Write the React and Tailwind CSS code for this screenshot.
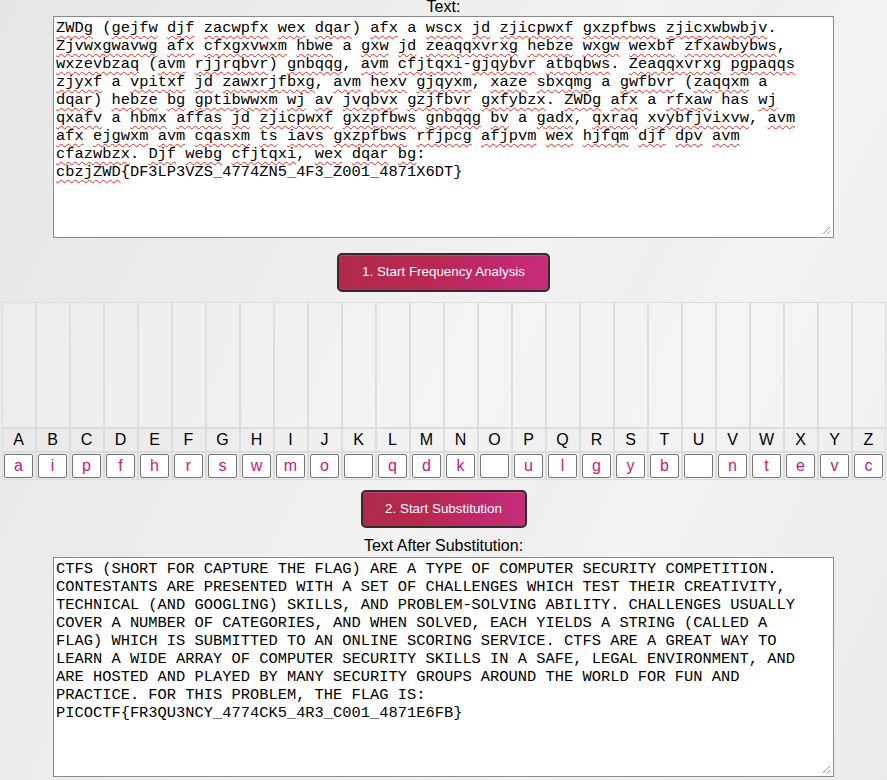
import React from 'react'

// plain -> cipher key used for the ciphertext box
const KEY = {
  a: 'a', b: 't', c: 'z', d: 'm', e: 'x', f: 'd', g: 'r', h: 'e', i: 'b', k: 'n', l: 'q', m: 'i',
  n: 'v', o: 'j', p: 'c', q: 'l', r: 'f', s: 'g', t: 'w', u: 'p', v: 'y', w: 'h', y: 's',
}

const encode = (s) =>
  s.replace(/[a-zA-Z]/g, (ch) => {
    const lo = ch.toLowerCase()
    const out = KEY[lo] || lo
    return ch === lo ? out : out.toUpperCase()
  })

const PLAIN = [
  'CTFs (short for capture the flag) are a type of computer security competition.',
  'Contestants are presented with a set of challenges which test their creativity,',
  'technical (and googling) skills, and problem-solving ability. Challenges usually',
  'cover a number of categories, and when solved, each yields a string (called a',
  'flag) which is submitted to an online scoring service. CTFs are a great way to',
  'learn a wide array of computer security skills in a safe, legal environment, and',
  'are hosted and played by many security groups around the world for fun and',
  'practice. For this problem, the flag is:',
  'picoCTF{FR3QU3NCY_4774CK5_4R3_C001_4871E6FB}',
]

const LETTERS = 'ABCDEFGHIJKLMNOPQRSTUVWXYZ'.split('')
const GUESS = ['a', 'i', 'p', 'f', 'h', 'r', 's', 'w', 'm', 'o', '', 'q', 'd', 'k', '', 'u', 'l', 'g', 'y', 'b', '', 'n', 't', 'e', 'v', 'c']

const sq =
  'underline decoration-wavy decoration-[#e8261b] decoration-1 underline-offset-[3px] [text-decoration-skip-ink:none]'

const CipherLine = ({ line }) => {
  const brace = line.indexOf('{')
  if (brace > -1) {
    return (
      <>
        <span className={sq}>{line.slice(0, brace)}</span>
        {line.slice(brace)}
      </>
    )
  }
  const parts = line.split(/([A-Za-z]+)/)
  return parts.map((p, i) =>
    i % 2 === 1 && p !== 'a' && p !== 'has' ? (
      <span key={i} className={sq}>
        {p}
      </span>
    ) : (
      <React.Fragment key={i}>{p}</React.Fragment>
    )
  )
}

const Grip = () => (
  <svg className="absolute right-[2px] bottom-[2px]" width="9" height="9" viewBox="0 0 9 9">
    <path d="M8 1 L1 8 M8 5 L5 8" stroke="#9a9a9a" strokeWidth="1" />
  </svg>
)

const TextBox = ({ children, h }) => (
  <div
    className={`relative w-[781px] ${h} bg-white border border-[#8a8a8a] px-[2px] pt-[2px] text-black whitespace-pre overflow-hidden text-[15.4px] leading-[18px]`}
    style={{ fontFamily: '"Liberation Mono", "Courier New", monospace' }}
  >
    {children}
    <Grip />
  </div>
)

const Button = ({ children, w, h }) => (
  <button
    className={`${w} ${h} rounded-[5px] border-2 border-[#2e2e2e] text-white text-[13.4px] bg-[linear-gradient(100deg,#b02a4b_0%,#b8284f_40%,#c0286a_70%,#c72d7b_100%)] shadow-[inset_0_1px_0_rgba(255,255,255,0.15)]`}
  >
    {children}
  </button>
)

export default function App() {
  return (
    <div
      className="w-full min-h-screen overflow-hidden flex flex-col items-center bg-[linear-gradient(115deg,#e6e6e6_0%,#ececec_30%,#f2f2f2_52%,#efefef_62%,#f3f3f3_70%,#eaeaea_100%)]"
      style={{ fontFamily: '"Liberation Sans", Arial, sans-serif' }}
    >
      {/* CIPHER TEXT */}
      <div className="-mt-[2px] h-[18px] leading-[18px] text-[16px] text-black">Text:</div>
      <TextBox h="h-[222px]">
        {PLAIN.map((l, i) => (
          <div key={i}>
            <CipherLine line={encode(l)} />
          </div>
        ))}
      </TextBox>

      <div className="mt-[15px]">
        <Button w="w-[213px]" h="h-[39px]">1. Start Frequency Analysis</Button>
      </div>

      {/* FREQUENCY TABLE */}
      <div className="mt-[10px] flex">
        {LETTERS.map((l, i) => (
          <div key={l} className="w-[34px] flex flex-col">
            <div className="h-[126px] border border-[#dcdcdc] bg-white/20" />
            <div className="h-[24px] border border-[#dcdcdc] flex items-center justify-center text-[16px] leading-none text-black">
              {l}
            </div>
            <div className="h-[28px] border border-[#dcdcdc] flex items-center justify-center">
              <div className="w-[29px] h-[24px] bg-white border border-[#767676] rounded-[2px] flex items-center justify-center text-[16px] leading-none text-[#c71585]">
                {GUESS[i]}
              </div>
            </div>
          </div>
        ))}
      </div>

      <div className="mt-[10px]">
        <Button w="w-[166px]" h="h-[38px]">2. Start Substitution</Button>
      </div>

      {/* PLAIN TEXT */}
      <div className="mt-[9px] h-[18px] leading-[18px] text-[16px] text-black">Text After Substitution:</div>
      <div className="mt-[2px]">
        <TextBox h="h-[220px]">
          {PLAIN.map((l, i) => (
            <div key={i}>{l.toUpperCase()}</div>
          ))}
        </TextBox>
      </div>
    </div>
  )
}
